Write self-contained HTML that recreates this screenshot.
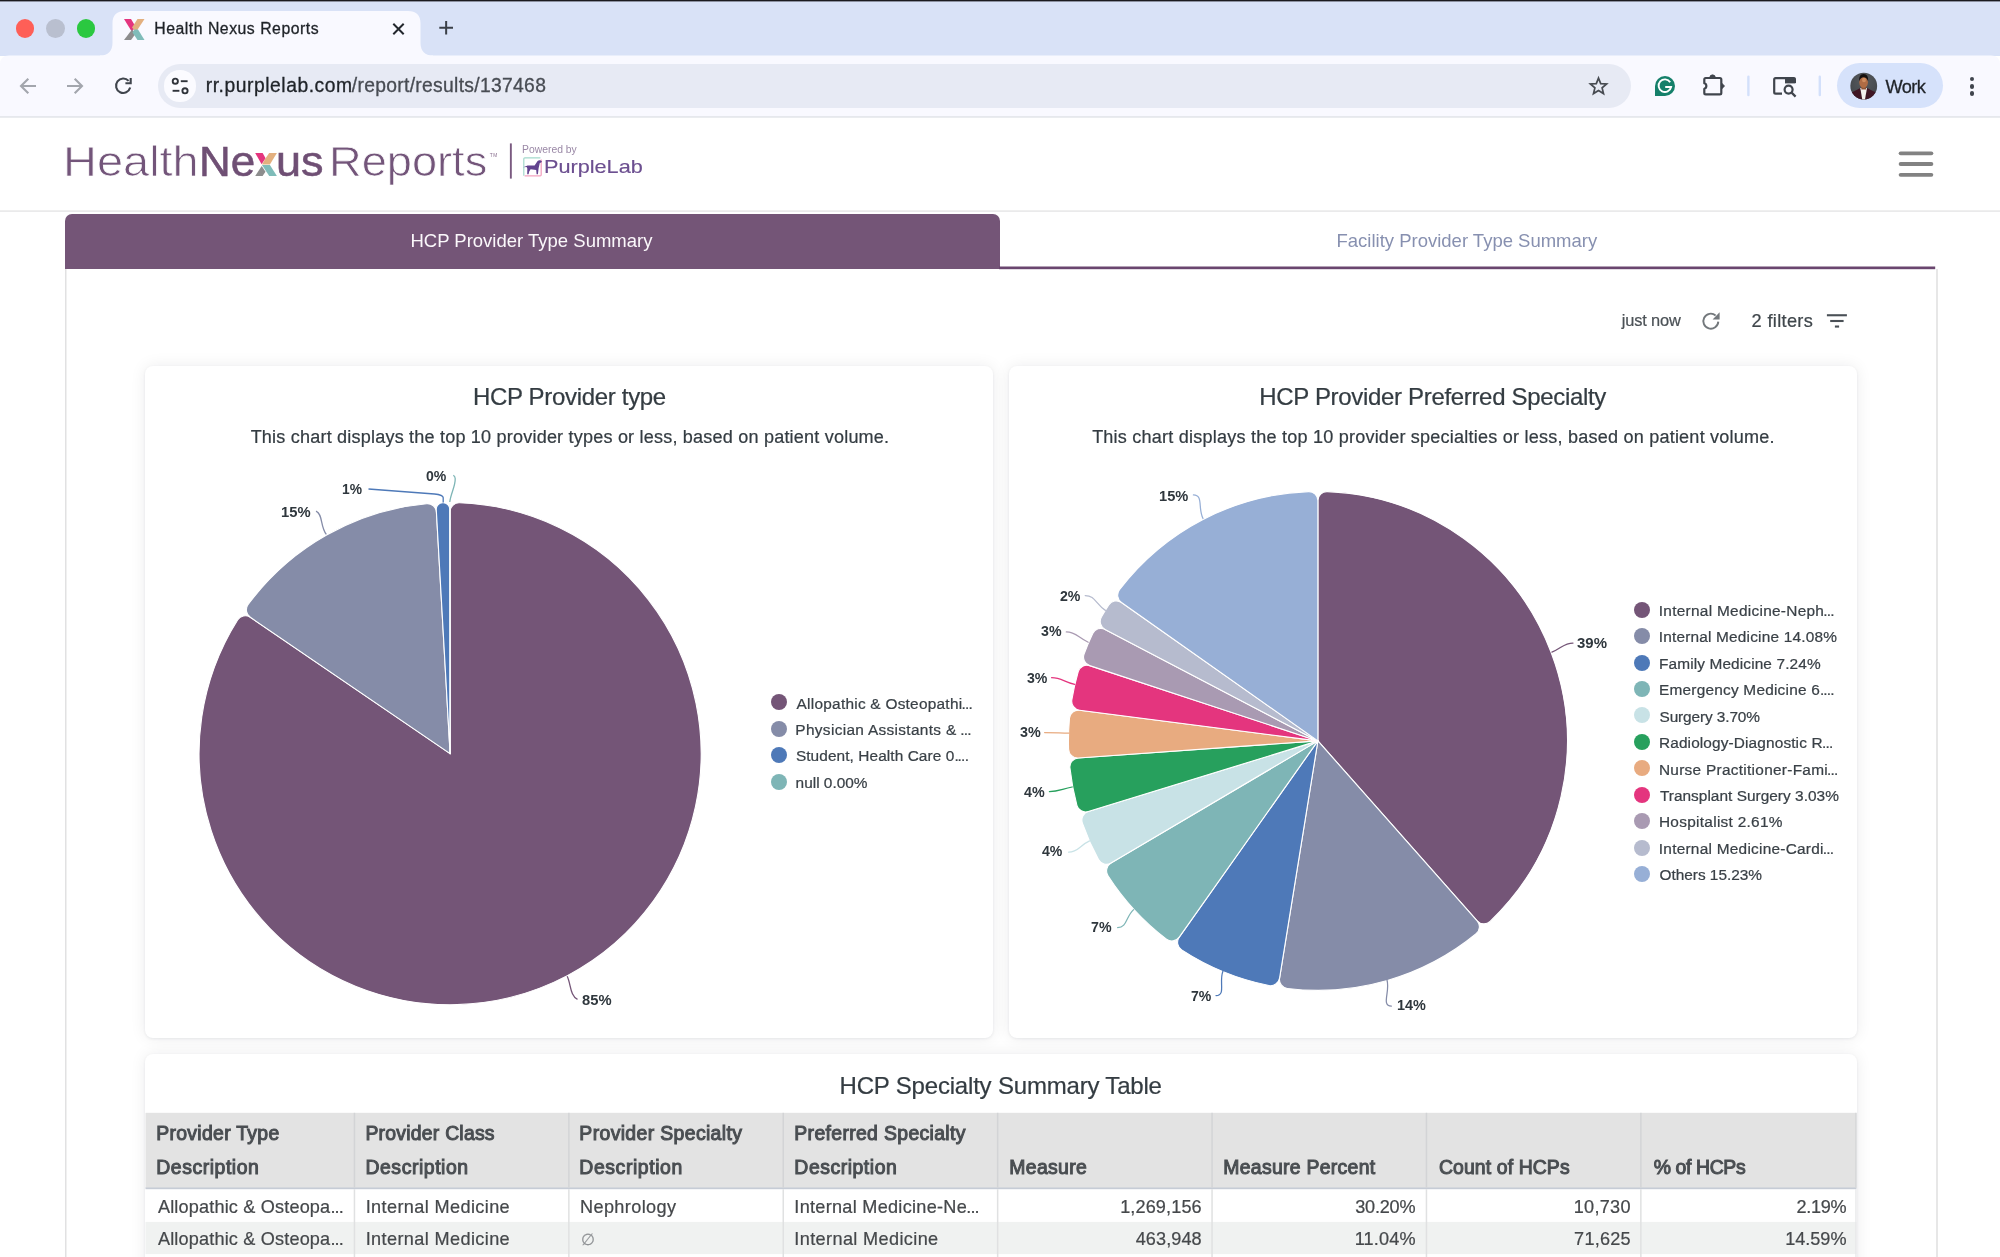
<!DOCTYPE html>
<html><head><meta charset="utf-8"><title>Health Nexus Reports</title>
<style>
html,body{margin:0;padding:0;background:#fff;}
body{width:2000px;height:1257px;overflow:hidden;font-family:"Liberation Sans",sans-serif;}
#root{will-change:transform;position:relative;width:2000px;height:1257px;overflow:hidden;background:#fff;}
.t{position:absolute;white-space:nowrap;font-family:"Liberation Sans",sans-serif;}
svg{position:absolute;left:0;top:0;overflow:visible;}
</style></head><body><div id="root">
<div style="position:absolute;left:0px;top:0px;width:2000px;height:56px;background:#d9e2f7;"></div>
<svg width="2000" height="1257"><rect x="0" y="0" width="2000" height="1.4" rx="0" fill="#1b1b1f"/></svg>
<svg width="2000" height="120"><path d="M0,117 L0,64.6 Q0,55.6 9,55.6 L1991,55.6 Q2000,55.6 2000,64.6 L2000,117 Z" fill="#f9f9ff"/></svg>
<svg width="2000" height="1257"><rect x="0" y="116.2" width="2000" height="1.5" rx="0" fill="#e2e4e9"/></svg>
<svg width="2000" height="60"><path d="M100,57 L100,55.6 C108,55.6 112.5,51 112.5,43 L112.5,23 C112.5,15 117,11 125,11 L408,11 C416,11 420.5,15 420.5,23 L420.5,43 C420.5,51 425,55.6 433,55.6 L433,57 L100,57 Z" fill="#f9f9ff"/></svg>
<div style="position:absolute;left:15.7px;top:19.2px;width:18.8px;height:18.8px;border-radius:50%;background:#fe5f57;"></div>
<div style="position:absolute;left:46.2px;top:19.2px;width:18.8px;height:18.8px;border-radius:50%;background:#b9bfcf;"></div>
<div style="position:absolute;left:76.7px;top:19.2px;width:18.8px;height:18.8px;border-radius:50%;background:#2bc840;"></div>
<svg width="2000" height="60">
<polygon points="124,19 131,19 135.5,26.5 132,32" fill="#e4357e"/>
<polygon points="137.5,19 144.5,19 136,32 132,27.5" fill="#e3b07f"/>
<polygon points="132,29.5 135.8,33.5 131,40 124,40" fill="#8d8d8d"/>
<polygon points="134.5,29.5 138,29.5 144.5,40 137.5,40 132.5,32.5" fill="#7fbcb9"/>
</svg>
<div class="t" style="left:154.34px;top:17px;font-size:15.8px;line-height:23px;letter-spacing:0.510px;color:#1f2328;-webkit-text-stroke:0.3px #1f2328;">Health Nexus Reports</div>
<svg width="2000" height="120" fill="none" stroke-linecap="butt">
<path d="M393.3,23.8 L403.7,34.2 M403.7,23.8 L393.3,34.2" stroke="#23272d" stroke-width="2"/>
<path d="M439.3,27.7 L453,27.7 M446.15,20.9 L446.15,34.6" stroke="#3a3f47" stroke-width="2"/>
<!-- back -->
<path d="M36,86 L21.5,86 M28.3,78.7 L21,86 L28.3,93.3" stroke="#a3a6ad" stroke-width="2.1" stroke-linejoin="miter"/>
<!-- forward -->
<path d="M67,86 L81.5,86 M74.7,78.7 L82,86 L74.7,93.3" stroke="#a3a6ad" stroke-width="2.1"/>
<!-- reload -->
<path d="M128.6,80.9 A7.2,7.2 0 1 0 130.2,87.6" stroke="#40454d" stroke-width="2.1"/>
<path d="M130.7,78 L130.7,83.3 L125.4,83.3" stroke="#40454d" stroke-width="2.1" stroke-linejoin="miter"/>
</svg>
<div style="position:absolute;left:158px;top:64px;width:1472.6px;height:44px;background:#e7eaf4;border-radius:22px;"></div>
<div style="position:absolute;left:164.4px;top:70.4px;width:31.2px;height:31.2px;background:#fbfbff;border-radius:50%;"></div>
<svg width="2000" height="120" fill="none" stroke="#30343b" stroke-width="1.9">
<circle cx="175.3" cy="81.2" r="2.6"/><path d="M180.8,81.2 L187.6,81.2"/>
<circle cx="185" cy="90.8" r="2.6"/><path d="M172.6,90.8 L179.4,90.8"/>
</svg>
<div class="t" style="left:205.75px;top:72px;font-size:19.3px;line-height:27px;letter-spacing:0.542px;color:#1f2328;-webkit-text-stroke:0.3px;">rr.purplelab.com</div>
<div class="t" style="left:351.80px;top:72px;font-size:19.3px;line-height:27px;letter-spacing:0.309px;color:#484c53;-webkit-text-stroke:0.3px;">/report/results/137468</div>
<svg width="2000" height="120"><path transform="translate(1598.5,86.2) scale(0.82) translate(-1598.5,-86.2)" d="M1598.5,76.3 L1601.2,83 L1608.4,83.5 L1602.9,88.2 L1604.6,95.2 L1598.5,91.4 L1592.4,95.2 L1594.1,88.2 L1588.6,83.5 L1595.8,83 Z" fill="none" stroke="#474b51" stroke-width="2.1" stroke-linejoin="miter"/></svg>
<svg width="2000" height="120"><path d="M1655,86 A10,10 0 1 1 1665,96 L1655,96 Z" fill="#15806a"/>
<path d="M1670.2,82.2 A6.3,6.3 0 1 0 1671.1,87 L1665.2,87" fill="none" stroke="#fff" stroke-width="1.9"/></svg>
<svg width="2000" height="120"><path d="M1704.3,83.3 L1704.3,79.4 Q1704.3,78 1705.7,78 L1719.9,78 Q1721.3,78 1721.3,79.4 L1721.3,93 Q1721.3,94.4 1719.9,94.4 L1705.7,94.4 Q1704.3,94.4 1704.3,93 L1704.3,88.7 A2.8,2.8 0 0 0 1704.3,83.3 Z" fill="none" stroke="#40454d" stroke-width="2.2" stroke-linejoin="round"/>
<path d="M1709.8,77.6 A2.75,2.75 0 0 1 1715.3,77.6 Z M1721.7,83.2 L1724.6,86 L1721.7,88.9 Z" fill="#40454d" stroke="#40454d" stroke-width="0.8" stroke-linejoin="round"/></svg>
<svg width="2000" height="1257"><rect x="1747.2" y="75.6" width="2.4" height="20.6" rx="1.2" fill="#d3e0fb"/></svg>
<svg width="2000" height="1257"><rect x="1818.6" y="75.6" width="2.4" height="20.6" rx="1.2" fill="#d3e0fb"/></svg>
<svg width="2000" height="120" fill="none" stroke="#40454d" stroke-width="2.2"><path d="M1782,93.6 L1775.6,93.6 Q1774.2,93.6 1774.2,92.2 L1774.2,79.6 Q1774.2,78.2 1775.6,78.2 L1793.5,78.2 Q1794.9,78.2 1794.9,79.6 L1794.9,83"/>
<path d="M1785,77.6 L1795.4,77.6 L1795.4,83.4 L1785,83.4 Z" fill="#40454d" stroke="none"/>
<circle cx="1788.6" cy="89.6" r="4"/><path d="M1791.6,92.6 L1795.6,96.6"/></svg>
<div style="position:absolute;left:1836.9px;top:63px;width:106.2px;height:45px;background:#d6e2fb;border-radius:22.5px;"></div>
<svg width="2000" height="120"><defs><clipPath id="av"><circle cx="1863.75" cy="86.1" r="13.4"/></clipPath>
<radialGradient id="avg" cx="0.5" cy="0.35" r="0.7"><stop offset="0" stop-color="#575b5f"/><stop offset="1" stop-color="#3e4246"/></radialGradient></defs>
<g clip-path="url(#av)"><rect x="1849" y="71" width="30" height="30" fill="url(#avg)"/>
<path d="M1849,101 L1849,93.6 Q1856,90.6 1860.3,88 L1863.6,97 L1867,88 Q1871.5,90.6 1879,93.6 L1879,101 Z" fill="#3f1624"/>
<polygon points="1860.3,88 1867,88 1864.7,101 1862.5,101" fill="#f4f1ee"/>
<rect x="1861.3" y="84.5" width="4.8" height="5" fill="#8b5335"/>
<ellipse cx="1863.6" cy="82.2" rx="4.3" ry="5.9" fill="#b06c44"/>
<ellipse cx="1864" cy="80" rx="2" ry="2.2" fill="#d08d5f"/>
<path d="M1859.1,81.2 Q1858.8,73.9 1863.6,73.9 Q1868.5,73.9 1868.2,81.2 Q1866.6,77.2 1863.6,77.2 Q1860.7,77.2 1859.1,81.2 Z" fill="#15100f"/></g></svg>
<div class="t" style="left:1885.51px;top:74px;font-size:18.2px;line-height:26px;letter-spacing:-0.547px;color:#1f2328;-webkit-text-stroke:0.3px;">Work</div>
<div style="position:absolute;left:1969.7px;top:76.7px;width:4.6px;height:4.6px;border-radius:50%;background:#40454d;"></div>
<div style="position:absolute;left:1969.7px;top:83.95px;width:4.6px;height:4.6px;border-radius:50%;background:#40454d;"></div>
<div style="position:absolute;left:1969.7px;top:91.2px;width:4.6px;height:4.6px;border-radius:50%;background:#40454d;"></div>
<div class="t" style="left:62.54px;top:134px;font-size:42.6px;line-height:54px;letter-spacing:0.000px;color:#73557a;-webkit-text-stroke:0.75px #fff;transform:scaleX(1.1023);transform-origin:0 0;">Health</div>
<div class="t" style="left:199.18px;top:134px;font-size:42.6px;line-height:54px;letter-spacing:0.000px;color:#6f4f74;-webkit-text-stroke:0.55px #6f4f74;transform:scaleX(1.0325);transform-origin:0 0;">Ne</div>
<div class="t" style="left:276.07px;top:134px;font-size:42.6px;line-height:54px;letter-spacing:0.000px;color:#6f4f74;-webkit-text-stroke:0.55px #6f4f74;transform:scaleX(1.0570);transform-origin:0 0;">us</div>
<div class="t" style="left:329.18px;top:134px;font-size:42.6px;line-height:54px;letter-spacing:0.000px;color:#73557a;-webkit-text-stroke:0.75px #fff;transform:scaleX(1.0610);transform-origin:0 0;">Reports</div>
<svg width="2000" height="220">
<polygon points="255.2,153 262.6,153 265.6,158.3 261.6,164.2" fill="#e4357e"/>
<polygon points="269.2,153 276.9,153 269.9,164.6 262,164.6 265.4,158.6" fill="#e3b07f"/>
<polygon points="262,164.9 269.9,164.9 276.9,176.1 269.2,176.1" fill="#7fbcb9"/>
<polygon points="261.7,166 265.5,171.8 262.6,176.1 255.2,176.1" fill="#8d8d8d"/>
</svg>
<div class="t" style="left:489.70px;top:150px;font-size:4.8px;line-height:11px;letter-spacing:0.568px;color:#8a7090;">TM</div>
<svg width="2000" height="1257"><rect x="509.9" y="143.4" width="1.9" height="35.2" rx="0" fill="#7a5a80"/></svg>
<div class="t" style="left:522.37px;top:141px;font-size:10.4px;line-height:17px;letter-spacing:0.000px;color:#9a88a6;transform:scaleX(0.9985);transform-origin:0 0;">Powered by</div>
<svg width="2000" height="220" fill="none"><path d="M523.8,175.8 L523.8,158.8 Q523.8,157.8 524.8,157.8 L540.4,157.8" stroke="#a3d9cb" stroke-width="1.2"/>
<path d="M541.2,159.5 L541.2,174.8 Q541.2,175.8 540.2,175.8 L524.6,175.8" stroke="#f3a3c0" stroke-width="1.3"/>
<path d="M523.3,167.2 L527.6,165.5 L534.6,165.4 L537.6,161 Q538.8,159.8 540.3,160.3 L542,161.4 L541.2,162.6 L539.8,163 L538.6,168.3 L537.9,174.3 L536.6,174.3 L536.2,170 L530.6,169.3 L529.2,171.5 L528.6,174.3 L527.2,174.3 L527.3,168.6 L526.6,167 Z" fill="#62438f"/></svg>
<div class="t" style="left:544.07px;top:153px;font-size:18.6px;line-height:27px;letter-spacing:0.000px;color:#6c4f90;-webkit-text-stroke:0.15px #6c4f90;transform:scaleX(1.1649);transform-origin:0 0;">PurpleLab</div>
<svg width="2000" height="1257"><rect x="0" y="210.3" width="2000" height="1.6" rx="0" fill="#e8e8e9"/></svg>
<svg width="2000" height="1257"><rect x="1898.7" y="151.4" width="34.6" height="3.8" rx="1.9" fill="#828282"/></svg>
<svg width="2000" height="1257"><rect x="1898.7" y="162.1" width="34.6" height="3.8" rx="1.9" fill="#828282"/></svg>
<svg width="2000" height="1257"><rect x="1898.7" y="172.9" width="34.6" height="3.8" rx="1.9" fill="#828282"/></svg>
<div style="position:absolute;left:65px;top:213.8px;width:935px;height:55.4px;background:#745577;border-radius:7px 7px 0 0;"></div>
<svg width="2000" height="1257"><rect x="999" y="266.5" width="936.2" height="2.7" rx="0" fill="#6a466f"/></svg>
<div class="t" style="left:410.42px;top:227px;font-size:18.5px;line-height:27px;letter-spacing:0.004px;color:#fbf8fb;-webkit-text-stroke:0;">HCP Provider Type Summary</div>
<div class="t" style="left:1336.52px;top:227px;font-size:18.5px;line-height:27px;letter-spacing:-0.003px;color:#8790b0;-webkit-text-stroke:0;">Facility Provider Type Summary</div>
<svg width="2000" height="1257"><rect x="65" y="269" width="1.5" height="990" rx="0" fill="#e1e1e2"/></svg>
<svg width="2000" height="1257"><rect x="1936.2" y="269" width="1.6" height="990" rx="0" fill="#e1e1e2"/></svg>
<div class="t" style="left:1621.71px;top:308px;font-size:16.4px;line-height:24px;letter-spacing:-0.128px;color:#4c5257;-webkit-text-stroke:0.22px;">just now</div>
<svg width="2000" height="400" fill="none"><path d="M1718.3,321.6 A7.5,7.5 0 1 1 1715.6,315.4" stroke="#73787c" stroke-width="1.9"/><path d="M1719.6,312.2 L1719.6,319.4 L1712.6,319.4 Z" fill="#73787c"/></svg>
<div class="t" style="left:1751.59px;top:308px;font-size:18.2px;line-height:26px;letter-spacing:0.331px;color:#3f464b;-webkit-text-stroke:0.22px;">2 filters</div>
<svg width="2000" height="1257"><rect x="1826.9" y="314.2" width="20" height="2.1" rx="0" fill="#4a5056"/></svg>
<svg width="2000" height="1257"><rect x="1830.2" y="319.95" width="13.4" height="2.1" rx="0" fill="#4a5056"/></svg>
<svg width="2000" height="1257"><rect x="1834.9" y="325.5" width="4.2" height="2.1" rx="0" fill="#4a5056"/></svg>
<div style="position:absolute;left:145.2px;top:365.8px;width:847.8px;height:672.4px;box-shadow:0 0 16px rgba(20,30,40,0.08),0 1px 3px rgba(20,30,40,0.07);background:#fff;border-radius:8px;"></div>
<div style="position:absolute;left:1009px;top:365.8px;width:847.6px;height:672.4px;box-shadow:0 0 16px rgba(20,30,40,0.08),0 1px 3px rgba(20,30,40,0.07);background:#fff;border-radius:8px;"></div>
<div style="position:absolute;left:145.2px;top:1054.2px;width:1711.4px;height:260px;box-shadow:0 0 16px rgba(20,30,40,0.08),0 1px 3px rgba(20,30,40,0.07);background:#fff;border-radius:8px;"></div>
<div class="t" style="left:472.98px;top:380px;font-size:24px;line-height:33px;letter-spacing:-0.316px;color:#343c42;-webkit-text-stroke:0.22px;">HCP Provider type</div>
<div class="t" style="left:1259.28px;top:380px;font-size:24px;line-height:33px;letter-spacing:-0.322px;color:#343c42;-webkit-text-stroke:0.22px;">HCP Provider Preferred Specialty</div>
<div class="t" style="left:250.64px;top:424px;font-size:18.06px;line-height:26px;letter-spacing:0.199px;color:#343c42;-webkit-text-stroke:0.22px;">This chart displays the top 10 provider types or less, based on patient volume.</div>
<div class="t" style="left:1092.14px;top:424px;font-size:18.06px;line-height:26px;letter-spacing:0.219px;color:#343c42;-webkit-text-stroke:0.22px;">This chart displays the top 10 provider specialties or less, based on patient volume.</div>
<svg width="2000" height="1257"><path d="M450.10,753.65L450.10,511.77A9.00,9.00 0 0 1 459.43,502.77A251.05,251.05 0 1 1 237.61,619.96A9.00,9.00 0 0 1 250.30,617.31Z" fill="#745577" stroke="#fff" stroke-width="1.1" stroke-linejoin="round"/>
<path d="M450.10,753.65L250.30,617.31A9.00,9.00 0 0 1 248.13,604.54A251.05,251.05 0 0 1 426.60,503.70A9.00,9.00 0 0 1 436.43,512.15Z" fill="#858ca8" stroke="#fff" stroke-width="1.1" stroke-linejoin="round"/>
<path d="M450.10,753.65L436.28,509.52A6.45,6.45 0 0 1 442.52,502.71A251.05,251.05 0 0 1 443.17,502.70A6.45,6.45 0 0 1 449.79,509.13Z" fill="#4e79b8" stroke="#fff" stroke-width="1.1" stroke-linejoin="round"/>
<path d="M450.10,753.65L449.78,502.79A0.19,0.19 0 0 1 449.98,502.60A251.05,251.05 0 0 1 449.91,502.60A0.19,0.19 0 0 1 450.10,502.79Z" fill="#7eb5b6" stroke="#fff" stroke-width="1.1" stroke-linejoin="round"/></svg>
<svg width="2000" height="1257"><path d="M1317.90,740.90L1317.90,500.62A9.00,9.00 0 0 1 1327.24,491.62A249.45,249.45 0 0 1 1490.09,921.39A9.00,9.00 0 0 1 1477.14,920.84Z" fill="#745577" stroke="#fff" stroke-width="1.1" stroke-linejoin="round"/>
<path d="M1317.90,740.90L1477.14,920.84A9.00,9.00 0 0 1 1476.11,933.76A249.45,249.45 0 0 1 1287.35,988.47A9.00,9.00 0 0 1 1279.57,978.10Z" fill="#858ca8" stroke="#fff" stroke-width="1.1" stroke-linejoin="round"/>
<path d="M1317.90,740.90L1279.57,978.10A9.00,9.00 0 0 1 1268.91,985.49A249.45,249.45 0 0 1 1181.68,949.87A9.00,9.00 0 0 1 1179.24,937.14Z" fill="#4e79b8" stroke="#fff" stroke-width="1.1" stroke-linejoin="round"/>
<path d="M1317.90,740.90L1179.24,937.14A9.00,9.00 0 0 1 1166.43,939.10A249.45,249.45 0 0 1 1108.01,875.70A9.00,9.00 0 0 1 1111.00,863.08Z" fill="#7eb5b6" stroke="#fff" stroke-width="1.1" stroke-linejoin="round"/>
<path d="M1317.90,740.90L1111.00,863.08A9.00,9.00 0 0 1 1098.51,859.62A249.45,249.45 0 0 1 1082.39,823.12A9.00,9.00 0 0 1 1088.24,811.55Z" fill="#c8e2e6" stroke="#fff" stroke-width="1.1" stroke-linejoin="round"/>
<path d="M1317.90,740.90L1088.24,811.55A9.00,9.00 0 0 1 1076.90,805.27A249.45,249.45 0 0 1 1069.92,767.90A9.00,9.00 0 0 1 1078.22,757.95Z" fill="#27a05d" stroke="#fff" stroke-width="1.1" stroke-linejoin="round"/>
<path d="M1317.90,740.90L1078.22,757.95A9.00,9.00 0 0 1 1068.59,749.27A249.45,249.45 0 0 1 1069.48,718.30A9.00,9.00 0 0 1 1079.59,710.19Z" fill="#e8ab80" stroke="#fff" stroke-width="1.1" stroke-linejoin="round"/>
<path d="M1317.90,740.90L1079.59,710.19A9.00,9.00 0 0 1 1071.86,699.78A249.45,249.45 0 0 1 1078.24,671.69A9.00,9.00 0 0 1 1089.71,665.64Z" fill="#e4357e" stroke="#fff" stroke-width="1.1" stroke-linejoin="round"/>
<path d="M1317.90,740.90L1089.71,665.64A9.00,9.00 0 0 1 1084.09,653.96A249.45,249.45 0 0 1 1092.76,633.50A9.00,9.00 0 0 1 1105.06,629.40Z" fill="#a99ab2" stroke="#fff" stroke-width="1.1" stroke-linejoin="round"/>
<path d="M1317.90,740.90L1105.06,629.40A9.00,9.00 0 0 1 1101.42,616.96A249.45,249.45 0 0 1 1108.76,604.94A9.00,9.00 0 0 1 1121.49,602.49Z" fill="#b6bbce" stroke="#fff" stroke-width="1.1" stroke-linejoin="round"/>
<path d="M1317.90,740.90L1121.49,602.49A9.00,9.00 0 0 1 1119.51,589.68A249.45,249.45 0 0 1 1308.56,491.62A9.00,9.00 0 0 1 1317.90,500.62Z" fill="#97afd6" stroke="#fff" stroke-width="1.1" stroke-linejoin="round"/></svg>
<svg width="2000" height="1257" fill="none" stroke-width="1.3">
<path d="M567.2,976.2 C571,984 570,996 577.5,999.4" stroke="#745577"/>
<path d="M326.3,534.4 C320,526 323,514 316,511.2" stroke="#858ca8"/>
<path d="M443.2,502.6 L443.2,497.6 Q443,494.8 434.5,494 L368.5,489" stroke="#4e79b8"/>
<path d="M449.8,502 C450.5,494 455.6,486 455.2,478.5 Q455,475.8 453.2,475.4" stroke="#7eb5b6"/>
</svg>
<svg width="2000" height="1257" fill="none" stroke-width="1.25" stroke-linecap="round"><path d="M1551.9,652.1 C1561.6,648.4 1563.8,643.0 1573.0,643.0" stroke="#745577"/><path d="M1387.0,980.0 C1390.3,991.4 1380.9,1006.0 1391.4,1006.0" stroke="#858ca8"/><path d="M1223.0,971.0 C1218.6,981.6 1226.2,995.6 1216.0,995.6" stroke="#4e79b8"/><path d="M1133.6,909.6 C1125.6,916.9 1127.2,927.6 1117.6,927.6" stroke="#7eb5b6"/><path d="M1089.6,840.9 C1079.8,845.2 1078.1,852.2 1068.6,852.2" stroke="#c8e2e6"/><path d="M1072.1,787.0 C1061.9,788.9 1058.7,791.5 1049.4,791.5" stroke="#27a05d"/><path d="M1069.0,733.2 C1058.0,732.9 1054.4,732.5 1044.6,732.5" stroke="#e8ab80"/><path d="M1074.7,684.4 C1064.2,682.0 1061.2,677.7 1051.6,677.7" stroke="#e4357e"/><path d="M1088.2,642.2 C1078.2,637.9 1076.0,631.9 1066.3,631.9" stroke="#a99ab2"/><path d="M1105.4,610.4 C1095.8,604.5 1095.2,595.5 1085.2,595.5" stroke="#b6bbce"/><path d="M1203.0,518.5 C1197.7,508.3 1203.6,494.9 1193.4,494.9" stroke="#97afd6"/></svg>
<div class="t" style="left:581.56px;top:988px;font-size:15.3px;line-height:23px;letter-spacing:0.000px;color:#2f373d;font-weight:bold;transform:scaleX(0.9644);transform-origin:0 0;">85%</div>
<div class="t" style="left:280.91px;top:500px;font-size:15.3px;line-height:23px;letter-spacing:0.000px;color:#2f373d;font-weight:bold;transform:scaleX(0.9659);transform-origin:0 0;">15%</div>
<div class="t" style="left:342.17px;top:477px;font-size:15.3px;line-height:23px;letter-spacing:0.000px;color:#2f373d;font-weight:bold;transform:scaleX(0.9035);transform-origin:0 0;">1%</div>
<div class="t" style="left:426.44px;top:464px;font-size:15.3px;line-height:23px;letter-spacing:0.000px;color:#2f373d;font-weight:bold;transform:scaleX(0.9188);transform-origin:0 0;">0%</div>
<div style="position:absolute;left:770.7px;top:694.25px;width:16px;height:16px;border-radius:50%;background:#745577;"></div>
<div class="t" style="left:796.60px;top:692px;font-size:15.4px;line-height:23px;letter-spacing:0.252px;color:#3a4147;-webkit-text-stroke:0.22px;">Allopathic &amp; Osteopathi</div>
<div class="t" style="left:961.39px;top:692px;font-size:15.4px;line-height:23px;letter-spacing:-0.731px;color:#3a4147;-webkit-text-stroke:0.22px;">...</div>
<div style="position:absolute;left:770.7px;top:720.68px;width:16px;height:16px;border-radius:50%;background:#858ca8;"></div>
<div class="t" style="left:795.37px;top:718px;font-size:15.4px;line-height:23px;letter-spacing:0.328px;color:#3a4147;-webkit-text-stroke:0.22px;">Physician Assistants &amp;</div>
<div class="t" style="left:960.19px;top:718px;font-size:15.4px;line-height:23px;letter-spacing:-0.731px;color:#3a4147;-webkit-text-stroke:0.22px;">...</div>
<div style="position:absolute;left:770.7px;top:747.11px;width:16px;height:16px;border-radius:50%;background:#4e79b8;"></div>
<div class="t" style="left:795.91px;top:744px;font-size:15.4px;line-height:23px;letter-spacing:0.087px;color:#3a4147;-webkit-text-stroke:0.22px;">Student, Health Care 0.</div>
<div class="t" style="left:957.59px;top:744px;font-size:15.4px;line-height:23px;letter-spacing:-0.731px;color:#3a4147;-webkit-text-stroke:0.22px;">...</div>
<div style="position:absolute;left:770.7px;top:773.54px;width:16px;height:16px;border-radius:50%;background:#7eb5b6;"></div>
<div class="t" style="left:795.60px;top:771px;font-size:15.4px;line-height:23px;letter-spacing:0.002px;color:#3a4147;-webkit-text-stroke:0.22px;">null 0.00%</div>
<div style="position:absolute;left:1634.2px;top:601.7px;width:16px;height:16px;border-radius:50%;background:#745577;"></div>
<div class="t" style="left:1658.81px;top:599px;font-size:15.4px;line-height:23px;letter-spacing:0.285px;color:#3a4147;-webkit-text-stroke:0.22px;">Internal Medicine-Neph</div>
<div class="t" style="left:1823.19px;top:599px;font-size:15.4px;line-height:23px;letter-spacing:-0.731px;color:#3a4147;-webkit-text-stroke:0.22px;">...</div>
<div style="position:absolute;left:1634.2px;top:628.13px;width:16px;height:16px;border-radius:50%;background:#858ca8;"></div>
<div class="t" style="left:1658.81px;top:625px;font-size:15.4px;line-height:23px;letter-spacing:0.189px;color:#3a4147;-webkit-text-stroke:0.22px;">Internal Medicine 14.08%</div>
<div style="position:absolute;left:1634.2px;top:654.5600000000001px;width:16px;height:16px;border-radius:50%;background:#4e79b8;"></div>
<div class="t" style="left:1658.97px;top:652px;font-size:15.4px;line-height:23px;letter-spacing:0.127px;color:#3a4147;-webkit-text-stroke:0.22px;">Family Medicine 7.24%</div>
<div style="position:absolute;left:1634.2px;top:680.99px;width:16px;height:16px;border-radius:50%;background:#7eb5b6;"></div>
<div class="t" style="left:1658.97px;top:678px;font-size:15.4px;line-height:23px;letter-spacing:0.226px;color:#3a4147;-webkit-text-stroke:0.22px;">Emergency Medicine 6.</div>
<div class="t" style="left:1823.19px;top:678px;font-size:15.4px;line-height:23px;letter-spacing:-0.731px;color:#3a4147;-webkit-text-stroke:0.22px;">...</div>
<div style="position:absolute;left:1634.2px;top:707.4200000000001px;width:16px;height:16px;border-radius:50%;background:#c8e2e6;"></div>
<div class="t" style="left:1659.51px;top:705px;font-size:15.4px;line-height:23px;letter-spacing:-0.112px;color:#3a4147;-webkit-text-stroke:0.22px;">Surgery 3.70%</div>
<div style="position:absolute;left:1634.2px;top:733.85px;width:16px;height:16px;border-radius:50%;background:#27a05d;"></div>
<div class="t" style="left:1658.97px;top:731px;font-size:15.4px;line-height:23px;letter-spacing:0.129px;color:#3a4147;-webkit-text-stroke:0.22px;">Radiology-Diagnostic R</div>
<div class="t" style="left:1821.99px;top:731px;font-size:15.4px;line-height:23px;letter-spacing:-0.731px;color:#3a4147;-webkit-text-stroke:0.22px;">...</div>
<div style="position:absolute;left:1634.2px;top:760.28px;width:16px;height:16px;border-radius:50%;background:#e8ab80;"></div>
<div class="t" style="left:1658.97px;top:758px;font-size:15.4px;line-height:23px;letter-spacing:0.283px;color:#3a4147;-webkit-text-stroke:0.22px;">Nurse Practitioner-Fami</div>
<div class="t" style="left:1826.89px;top:758px;font-size:15.4px;line-height:23px;letter-spacing:-0.731px;color:#3a4147;-webkit-text-stroke:0.22px;">...</div>
<div style="position:absolute;left:1634.2px;top:786.71px;width:16px;height:16px;border-radius:50%;background:#e4357e;"></div>
<div class="t" style="left:1659.89px;top:784px;font-size:15.4px;line-height:23px;letter-spacing:0.031px;color:#3a4147;-webkit-text-stroke:0.22px;">Transplant Surgery 3.03%</div>
<div style="position:absolute;left:1634.2px;top:813.1400000000001px;width:16px;height:16px;border-radius:50%;background:#a99ab2;"></div>
<div class="t" style="left:1658.97px;top:810px;font-size:15.4px;line-height:23px;letter-spacing:0.288px;color:#3a4147;-webkit-text-stroke:0.22px;">Hospitalist 2.61%</div>
<div style="position:absolute;left:1634.2px;top:839.57px;width:16px;height:16px;border-radius:50%;background:#b6bbce;"></div>
<div class="t" style="left:1658.81px;top:837px;font-size:15.4px;line-height:23px;letter-spacing:0.253px;color:#3a4147;-webkit-text-stroke:0.22px;">Internal Medicine-Cardi</div>
<div class="t" style="left:1822.69px;top:837px;font-size:15.4px;line-height:23px;letter-spacing:-0.731px;color:#3a4147;-webkit-text-stroke:0.22px;">...</div>
<div style="position:absolute;left:1634.2px;top:866.0px;width:16px;height:16px;border-radius:50%;background:#97afd6;"></div>
<div class="t" style="left:1659.51px;top:863px;font-size:15.4px;line-height:23px;letter-spacing:-0.016px;color:#3a4147;-webkit-text-stroke:0.22px;">Others 15.23%</div>
<div class="t" style="left:1577.43px;top:631px;font-size:15.3px;line-height:23px;letter-spacing:0.000px;color:#2f373d;font-weight:bold;transform:scaleX(0.9787);transform-origin:0 0;">39%</div>
<div class="t" style="left:1396.54px;top:993px;font-size:15.3px;line-height:23px;letter-spacing:0.000px;color:#2f373d;font-weight:bold;transform:scaleX(0.9420);transform-origin:0 0;">14%</div>
<div class="t" style="left:1191.04px;top:984px;font-size:15.3px;line-height:23px;letter-spacing:0.000px;color:#2f373d;font-weight:bold;transform:scaleX(0.9188);transform-origin:0 0;">7%</div>
<div class="t" style="left:1091.43px;top:915px;font-size:15.3px;line-height:23px;letter-spacing:0.000px;color:#2f373d;font-weight:bold;transform:scaleX(0.9283);transform-origin:0 0;">7%</div>
<div class="t" style="left:1042.49px;top:839px;font-size:15.3px;line-height:23px;letter-spacing:0.000px;color:#2f373d;font-weight:bold;transform:scaleX(0.9211);transform-origin:0 0;">4%</div>
<div class="t" style="left:1023.79px;top:780px;font-size:15.3px;line-height:23px;letter-spacing:0.000px;color:#2f373d;font-weight:bold;transform:scaleX(0.9350);transform-origin:0 0;">4%</div>
<div class="t" style="left:1019.74px;top:720px;font-size:15.3px;line-height:23px;letter-spacing:0.000px;color:#2f373d;font-weight:bold;transform:scaleX(0.9371);transform-origin:0 0;">3%</div>
<div class="t" style="left:1026.65px;top:666px;font-size:15.3px;line-height:23px;letter-spacing:0.000px;color:#2f373d;font-weight:bold;transform:scaleX(0.9230);transform-origin:0 0;">3%</div>
<div class="t" style="left:1041.15px;top:619px;font-size:15.3px;line-height:23px;letter-spacing:0.000px;color:#2f373d;font-weight:bold;transform:scaleX(0.9277);transform-origin:0 0;">3%</div>
<div class="t" style="left:1059.90px;top:584px;font-size:15.3px;line-height:23px;letter-spacing:0.000px;color:#2f373d;font-weight:bold;transform:scaleX(0.9249);transform-origin:0 0;">2%</div>
<div class="t" style="left:1159.22px;top:484px;font-size:15.3px;line-height:23px;letter-spacing:0.000px;color:#2f373d;font-weight:bold;transform:scaleX(0.9556);transform-origin:0 0;">15%</div>
<div class="t" style="left:839.58px;top:1069px;font-size:24px;line-height:33px;letter-spacing:-0.187px;color:#343c42;-webkit-text-stroke:0.22px;">HCP Specialty Summary Table</div>
<svg width="2000" height="1257"><rect x="145.5" y="1112.8" width="1711" height="75.2" rx="0" fill="#e3e3e3"/></svg>
<svg width="2000" height="1257"><rect x="145.5" y="1187.5" width="1711" height="1.7" rx="0" fill="#c6ccd6"/></svg>
<svg width="2000" height="1257"><rect x="145.5" y="1221.9" width="1711" height="32.2" rx="0" fill="#f0f2f1"/></svg>
<svg width="2000" height="1257"><rect x="353.7" y="1112.8" width="1.5" height="74.8" rx="0" fill="#d3d4d6"/></svg>
<svg width="2000" height="1257"><rect x="353.7" y="1189.2" width="1.5" height="70" rx="0" fill="#e0e1e2"/></svg>
<svg width="2000" height="1257"><rect x="568.1" y="1112.8" width="1.5" height="74.8" rx="0" fill="#d3d4d6"/></svg>
<svg width="2000" height="1257"><rect x="568.1" y="1189.2" width="1.5" height="70" rx="0" fill="#e0e1e2"/></svg>
<svg width="2000" height="1257"><rect x="782.5" y="1112.8" width="1.5" height="74.8" rx="0" fill="#d3d4d6"/></svg>
<svg width="2000" height="1257"><rect x="782.5" y="1189.2" width="1.5" height="70" rx="0" fill="#e0e1e2"/></svg>
<svg width="2000" height="1257"><rect x="996.9000000000001" y="1112.8" width="1.5" height="74.8" rx="0" fill="#d3d4d6"/></svg>
<svg width="2000" height="1257"><rect x="996.9000000000001" y="1189.2" width="1.5" height="70" rx="0" fill="#e0e1e2"/></svg>
<svg width="2000" height="1257"><rect x="1211.3" y="1112.8" width="1.5" height="74.8" rx="0" fill="#d3d4d6"/></svg>
<svg width="2000" height="1257"><rect x="1211.3" y="1189.2" width="1.5" height="70" rx="0" fill="#e0e1e2"/></svg>
<svg width="2000" height="1257"><rect x="1425.7" y="1112.8" width="1.5" height="74.8" rx="0" fill="#d3d4d6"/></svg>
<svg width="2000" height="1257"><rect x="1425.7" y="1189.2" width="1.5" height="70" rx="0" fill="#e0e1e2"/></svg>
<svg width="2000" height="1257"><rect x="1640.1000000000001" y="1112.8" width="1.5" height="74.8" rx="0" fill="#d3d4d6"/></svg>
<svg width="2000" height="1257"><rect x="1640.1000000000001" y="1189.2" width="1.5" height="70" rx="0" fill="#e0e1e2"/></svg>
<svg width="2000" height="1257"><rect x="1855.3" y="1112.8" width="1.3" height="74.8" rx="0" fill="#d3d4d6"/></svg>
<svg width="2000" height="1257"><rect x="1855.3" y="1189.2" width="1.3" height="70" rx="0" fill="#e6e7e8"/></svg>
<div class="t" style="left:156.25px;top:1119px;font-size:19.4px;line-height:28px;letter-spacing:0.310px;color:#4a4e52;-webkit-text-stroke:1px;">Provider Type</div>
<div class="t" style="left:156.25px;top:1153px;font-size:19.4px;line-height:28px;letter-spacing:0.561px;color:#4a4e52;-webkit-text-stroke:1px;">Description</div>
<div class="t" style="left:365.45px;top:1119px;font-size:19.4px;line-height:28px;letter-spacing:0.233px;color:#4a4e52;-webkit-text-stroke:1px;">Provider Class</div>
<div class="t" style="left:365.45px;top:1153px;font-size:19.4px;line-height:28px;letter-spacing:0.571px;color:#4a4e52;-webkit-text-stroke:1px;">Description</div>
<div class="t" style="left:579.35px;top:1119px;font-size:19.4px;line-height:28px;letter-spacing:0.370px;color:#4a4e52;-webkit-text-stroke:1px;">Provider Specialty</div>
<div class="t" style="left:579.35px;top:1153px;font-size:19.4px;line-height:28px;letter-spacing:0.591px;color:#4a4e52;-webkit-text-stroke:1px;">Description</div>
<div class="t" style="left:794.35px;top:1119px;font-size:19.4px;line-height:28px;letter-spacing:0.342px;color:#4a4e52;-webkit-text-stroke:1px;">Preferred Specialty</div>
<div class="t" style="left:794.35px;top:1153px;font-size:19.4px;line-height:28px;letter-spacing:0.541px;color:#4a4e52;-webkit-text-stroke:1px;">Description</div>
<div class="t" style="left:1009.35px;top:1153px;font-size:19.4px;line-height:28px;letter-spacing:0.327px;color:#4a4e52;-webkit-text-stroke:1px;">Measure</div>
<div class="t" style="left:1223.35px;top:1153px;font-size:19.4px;line-height:28px;letter-spacing:0.294px;color:#4a4e52;-webkit-text-stroke:1px;">Measure Percent</div>
<div class="t" style="left:1438.93px;top:1153px;font-size:19.4px;line-height:28px;letter-spacing:0.113px;color:#4a4e52;-webkit-text-stroke:1px;">Count of HCPs</div>
<div class="t" style="left:1653.72px;top:1153px;font-size:19.4px;line-height:28px;letter-spacing:-0.364px;color:#4a4e52;-webkit-text-stroke:1px;">% of HCPs</div>
<div class="t" style="left:157.90px;top:1194px;font-size:18.1px;line-height:26px;letter-spacing:0.174px;color:#45484b;-webkit-text-stroke:0.22px;">Allopathic &amp; Osteopa</div>
<div class="t" style="left:330.43px;top:1194px;font-size:18.1px;line-height:26px;letter-spacing:-0.860px;color:#45484b;-webkit-text-stroke:0.22px;">...</div>
<div class="t" style="left:365.67px;top:1194px;font-size:18.1px;line-height:26px;letter-spacing:0.389px;color:#45484b;-webkit-text-stroke:0.22px;">Internal Medicine</div>
<div class="t" style="left:157.90px;top:1226px;font-size:18.1px;line-height:26px;letter-spacing:0.174px;color:#45484b;-webkit-text-stroke:0.22px;">Allopathic &amp; Osteopa</div>
<div class="t" style="left:330.43px;top:1226px;font-size:18.1px;line-height:26px;letter-spacing:-0.860px;color:#45484b;-webkit-text-stroke:0.22px;">...</div>
<div class="t" style="left:365.67px;top:1226px;font-size:18.1px;line-height:26px;letter-spacing:0.389px;color:#45484b;-webkit-text-stroke:0.22px;">Internal Medicine</div>
<div class="t" style="left:580.05px;top:1194px;font-size:18.1px;line-height:26px;letter-spacing:0.374px;color:#45484b;-webkit-text-stroke:0.22px;">Nephrology</div>
<div class="t" style="left:580.95px;top:1228px;font-size:15.5px;line-height:23px;letter-spacing:0.000px;color:#8f9295;-webkit-text-stroke:0.22px;">∅</div>
<div class="t" style="left:794.37px;top:1194px;font-size:18.1px;line-height:26px;letter-spacing:0.286px;color:#45484b;-webkit-text-stroke:0.22px;">Internal Medicine-Ne</div>
<div class="t" style="left:966.24px;top:1194px;font-size:18.1px;line-height:26px;letter-spacing:-0.860px;color:#45484b;-webkit-text-stroke:0.22px;">...</div>
<div class="t" style="left:794.37px;top:1226px;font-size:18.1px;line-height:26px;letter-spacing:0.376px;color:#45484b;-webkit-text-stroke:0.22px;">Internal Medicine</div>
<div class="t" style="left:1120.14px;top:1194px;font-size:18.1px;line-height:26px;letter-spacing:0.130px;color:#45484b;-webkit-text-stroke:0.22px;">1,269,156</div>
<div class="t" style="left:1135.64px;top:1226px;font-size:18.1px;line-height:26px;letter-spacing:0.109px;color:#45484b;-webkit-text-stroke:0.22px;">463,948</div>
<div class="t" style="left:1355.28px;top:1194px;font-size:18.1px;line-height:26px;letter-spacing:-0.218px;color:#45484b;-webkit-text-stroke:0.22px;">30.20%</div>
<div class="t" style="left:1354.64px;top:1226px;font-size:18.1px;line-height:26px;letter-spacing:0.180px;color:#45484b;-webkit-text-stroke:0.22px;">11.04%</div>
<div class="t" style="left:1573.64px;top:1194px;font-size:18.1px;line-height:26px;letter-spacing:0.321px;color:#45484b;-webkit-text-stroke:0.22px;">10,730</div>
<div class="t" style="left:1574.10px;top:1226px;font-size:18.1px;line-height:26px;letter-spacing:0.249px;color:#45484b;-webkit-text-stroke:0.22px;">71,625</div>
<div class="t" style="left:1796.60px;top:1194px;font-size:18.1px;line-height:26px;letter-spacing:-0.319px;color:#45484b;-webkit-text-stroke:0.22px;">2.19%</div>
<div class="t" style="left:1785.14px;top:1226px;font-size:18.1px;line-height:26px;letter-spacing:0.008px;color:#45484b;-webkit-text-stroke:0.22px;">14.59%</div>
</div></body></html>
